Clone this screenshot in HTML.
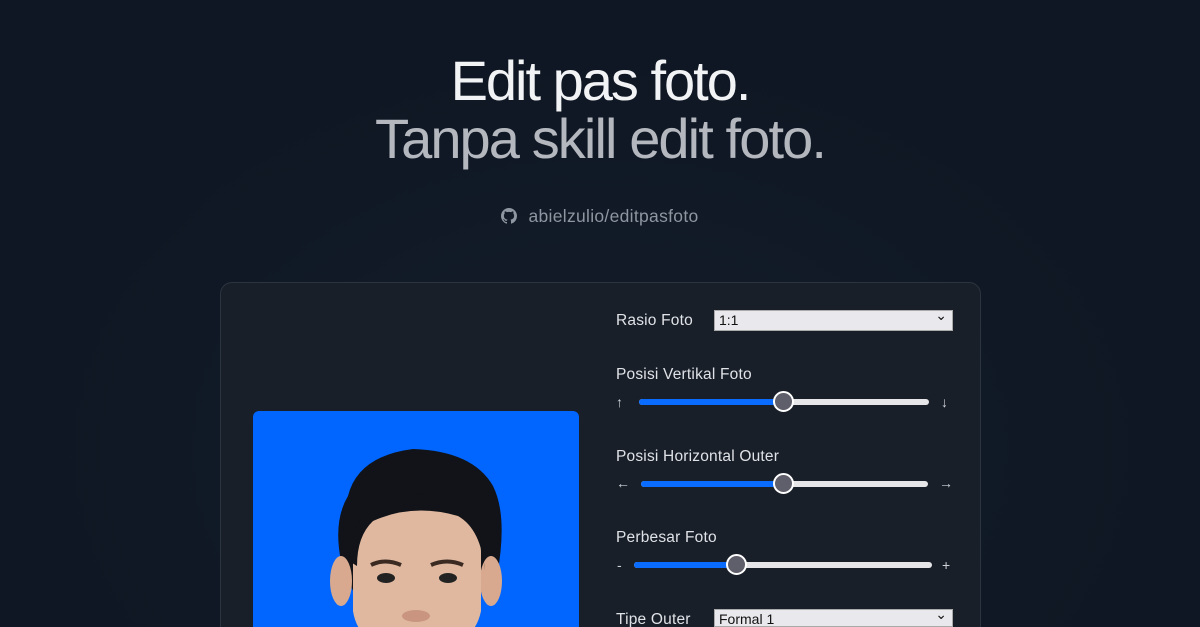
<!DOCTYPE html>
<html><head><meta charset="utf-8"><style>
*{margin:0;padding:0;box-sizing:border-box}
html,body{width:1200px;height:627px;overflow:hidden}
body{background:radial-gradient(ellipse 700px 500px at 600px 450px,#141d2a,#0f1724 80%);font-family:"Liberation Sans",sans-serif;position:relative}
.t{position:absolute;left:0;width:1200px;text-align:center;font-size:56px;letter-spacing:-2px;line-height:1}
.t1{top:53px;color:#f2f3f5}
.t2{top:111px;color:#b4b8be;letter-spacing:-1.9px}
.gh{position:absolute;top:206px;left:0;width:1200px;text-align:center;color:#8e96a1;font-size:17.5px;letter-spacing:0.3px}
.gh svg{vertical-align:-2px;margin-right:11px}
.card{position:absolute;left:220px;top:282px;width:761px;height:345px;border:1px solid #2c343f;border-bottom:none;border-radius:12px 12px 0 0;background:#181f29}
.photo{position:absolute;left:253px;top:411px;width:326px;height:216px;background:#0066ff;border-radius:6px 6px 0 0;overflow:hidden}
.lbl{position:absolute;color:#dfe2e6;font-size:15.5px;letter-spacing:0.2px}
.sel{position:absolute;left:714px;width:239px;height:21px;background:#e9e8ed;border:1px solid #aaa;color:#111;font-size:14px;padding:1px 4px}
.sel:after{content:"⌄";position:absolute;right:5px;top:-4px;font-size:14px}
.track{position:absolute;height:6px;border-radius:3px;background:#e6e6e9}
.fill{position:absolute;left:0;top:0;height:6px;border-radius:3px;background:#0a6cff}
.knob{position:absolute;width:21px;height:21px;border-radius:50%;background:#5f5f6b;border:2px solid #fff;top:-8px}
.ar{position:absolute;color:#cfd3d8;font-size:14px}
</style></head><body>
<div class="t t1">Edit pas foto.</div>
<div class="t t2">Tanpa skill edit foto.</div>
<div class="gh"><svg width="16" height="16" viewBox="0 0 16 16"><path fill="#8e96a1" d="M8 0C3.580 0 0 3.580 0 8c0 3.54 2.29 6.53 5.47 7.59.4.07.55-.17.55-.38v-1.330c-2.23.48-2.7-1.07-2.7-1.070-.36-.92-.89-1.170-.89-1.170-.73-.5.06-.49.06-.49.8.06 1.23.83 1.23.83.72 1.22 1.87.87 2.33.67.07-.52.28-.87.5-1.07-1.78-.2-3.64-.89-3.64-3.95 0-.87.31-1.59.82-2.15-.08-.2-.36-1.02.08-2.12 0 0 .67-.21 2.2.82.64-.18 1.32-.27 2-.27.68 0 1.36.09 2 .27 1.53-1.04 2.2-.82 2.2-.82.44 1.1.16 1.92.08 2.12.51.56.82 1.27.82 2.15 0 3.07-1.87 3.75-3.65 3.95.29.25.54.73.54 1.48v2.2c0 .21.15.46.55.38A8.01 8.01 0 0016 8c0-4.42-3.58-8-8-8z"/></svg>abielzulio/editpasfoto</div>
<div class="card"></div>
<div class="photo">
<svg width="326" height="216" viewBox="0 0 326 216">
<path d="M88 150 Q80 110 95 85 Q105 45 160 38 Q220 40 240 75 Q255 105 244 165 L230 180 L100 180 Z" fill="#111318"/>
<ellipse cx="88" cy="170" rx="11" ry="25" fill="#d8a98e"/>
<ellipse cx="238" cy="170" rx="11" ry="25" fill="#d8a98e"/>
<path d="M100 140 Q102 95 163 92 Q226 95 228 140 L228 200 Q220 240 163 240 Q106 240 100 200 Z" fill="#e0b8a0"/>
<path d="M96 150 Q96 95 150 84 Q200 80 225 110 L232 160 Q228 118 205 105 Q160 92 120 110 Q104 125 104 155 Z" fill="#111318"/>
<ellipse cx="133" cy="167" rx="9" ry="5" fill="#222"/>
<ellipse cx="195" cy="167" rx="9" ry="5" fill="#222"/>
<path d="M118 154 Q132 147 148 154" stroke="#3a2a22" stroke-width="4" fill="none"/>
<path d="M178 154 Q194 147 210 154" stroke="#3a2a22" stroke-width="4" fill="none"/>
<ellipse cx="163" cy="205" rx="14" ry="6" fill="#c99580"/>
</svg></div>
<div class="lbl" style="left:616px;top:312px">Rasio Foto</div>
<div class="sel" style="top:310px">1:1</div>
<div class="lbl" style="left:616px;top:366px">Posisi Vertikal Foto</div>
<div class="ar" style="left:616px;top:394px">↑</div>
<div class="track" style="left:639px;top:399px;width:290px"><div class="fill" style="width:145px"></div><div class="knob" style="left:134px"></div></div>
<div class="ar" style="left:941px;top:394px">↓</div>
<div class="lbl" style="left:616px;top:448px">Posisi Horizontal Outer</div>
<div class="ar" style="left:616px;top:475px">←</div>
<div class="track" style="left:641px;top:481px;width:287px"><div class="fill" style="width:143px"></div><div class="knob" style="left:132px"></div></div>
<div class="ar" style="left:939px;top:475px">→</div>
<div class="lbl" style="left:616px;top:529px">Perbesar Foto</div>
<div class="ar" style="left:617px;top:557px">-</div>
<div class="track" style="left:634px;top:562px;width:298px"><div class="fill" style="width:102px"></div><div class="knob" style="left:92px"></div></div>
<div class="ar" style="left:942px;top:557px">+</div>
<div class="lbl" style="left:616px;top:611px">Tipe Outer</div>
<div class="sel" style="top:609px;height:18px">Formal 1</div>
</body></html>
